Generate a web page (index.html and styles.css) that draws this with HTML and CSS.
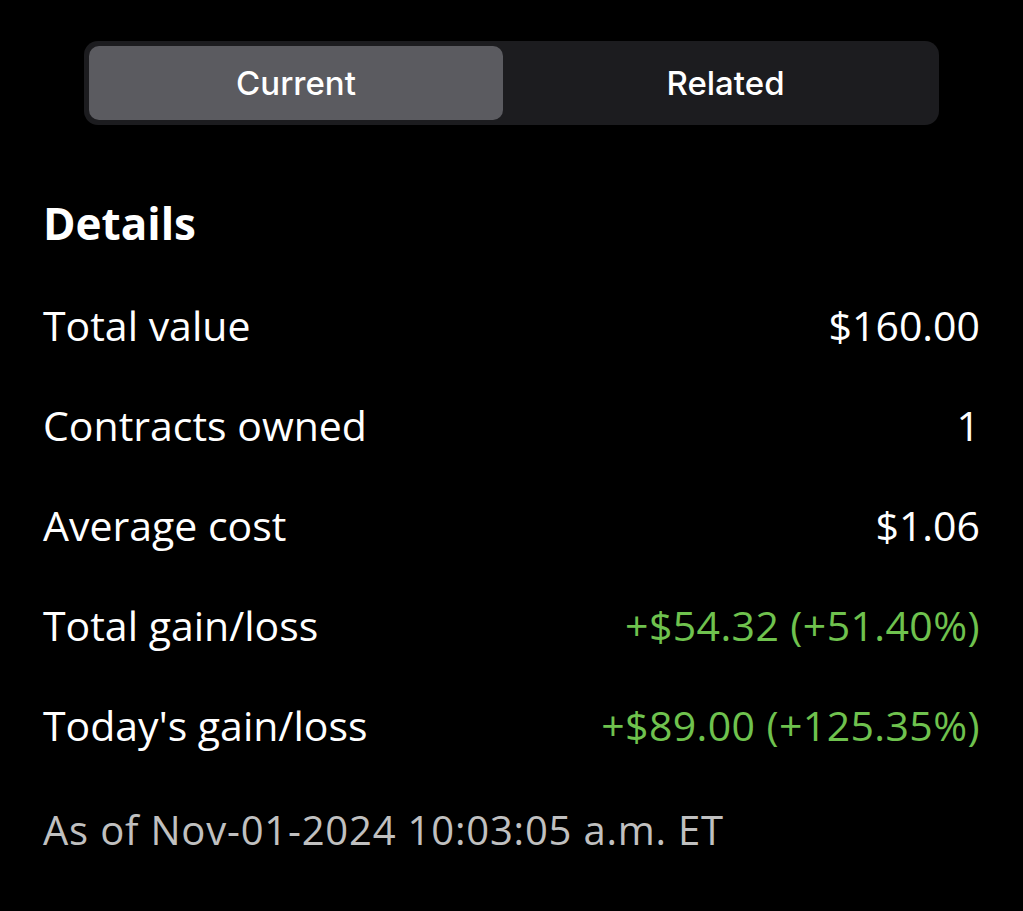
FILE: index.html
```html
<!DOCTYPE html>
<html>
<head>
<meta charset="utf-8">
<link rel="stylesheet" href="styles.css">
</head>
<body>
<div class="page">
  <div class="seg">
    <div class="seg-item active">Current</div>
    <div class="seg-item other">Related</div>
  </div>
  <h2 class="title">Details</h2>
  <div class="rows">
    <div class="row"><span>Total value</span><span>$160.00</span></div>
    <div class="row"><span>Contracts owned</span><span>1</span></div>
    <div class="row"><span>Average cost</span><span>$1.06</span></div>
    <div class="row"><span>Total gain/loss</span><span class="gain">+$54.32 (+51.40%)</span></div>
    <div class="row"><span>Today's gain/loss</span><span class="gain">+$89.00 (+125.35%)</span></div>
  </div>
  <div class="asof">As of Nov-01-2024 10:03:05 a.m. ET</div>
</div>
</body>
</html>
```
FILE: styles.css
```css
html, body {
  margin: 0;
  padding: 0;
  background: #000;
}
.page {
  width: 1023px;
  height: 911px;
  box-sizing: border-box;
  padding: 41px 43px 0 43px;
  color: #fff;
  font-family: "Open Sans", Lato, sans-serif;
}
.seg {
  margin: 0 41px 0 41px;
  height: 84px;
  box-sizing: border-box;
  padding: 5px;
  background: #1c1c1f;
  border-radius: 14px;
  display: flex;
}
.seg-item {
  flex: 1;
  display: flex;
  align-items: center;
  justify-content: center;
  font-family: Inter, Roboto, sans-serif;
  font-size: 33px;
  font-weight: 500;
  color: #fff;
  border-radius: 10px;
}
.seg-item.other {
  padding-left: 14px;
}
.seg-item.active {
  background: #5b5b60;
  flex: 0 0 414px;
}
.title {
  margin: 70px 0 0 0;
  font-size: 44px;
  font-weight: 700;
  line-height: 56px;
}
.rows {
  margin-top: 49px;
}
.row {
  display: flex;
  justify-content: space-between;
  height: 100px;
  line-height: 50px;
  font-size: 41px;
}
.gain {
  color: #6fc24e;
  letter-spacing: 0.4px;
}
.asof {
  margin-top: 5px;
  font-size: 40px;
  letter-spacing: 0.8px;
  color: #c0c0c0;
  line-height: 50px;
}
```
